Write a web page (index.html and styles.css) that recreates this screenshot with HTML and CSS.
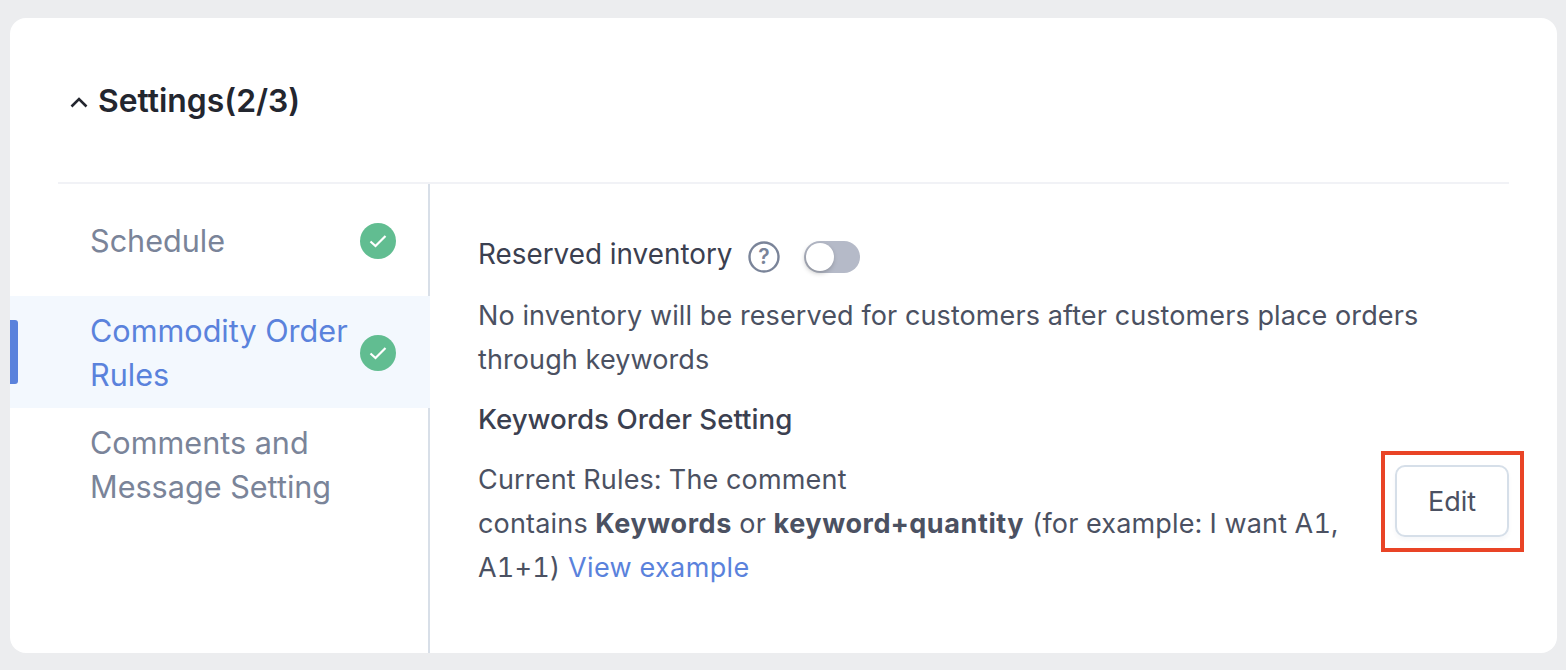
FILE: index.html
```html
<!DOCTYPE html>
<html lang="en">

<head>
    <meta charset="UTF-8">
    <title>Settings</title>
    <link rel="stylesheet" href="styles.css">
</head>

<body>
    <div class="card">
        <div class="card-header">
            <svg class="chevron" width="18" height="12" viewBox="0 0 18 12">
                <path d="M1.5 10.5 L9 3 L16.5 10.5" fill="none" stroke="#23262f" stroke-width="2.6" />
            </svg>
            <h2>Settings(2/3)</h2>
        </div>
        <div class="card-body">
            <div class="side-nav">
                <div class="nav-item">
                    <span class="nav-label">Schedule</span>
                    <svg class="check" width="36" height="36" viewBox="0 0 36 36">
                        <circle cx="18" cy="18" r="18" fill="#61bd91" />
                        <path d="M10.5 18.5 L15.5 23 L25.5 13" fill="none" stroke="#fff" stroke-width="2.2" />
                    </svg>
                </div>
                <div class="nav-item active">
                    <span class="nav-label">Commodity Order Rules</span>
                    <svg class="check" width="36" height="36" viewBox="0 0 36 36">
                        <circle cx="18" cy="18" r="18" fill="#61bd91" />
                        <path d="M10.5 18.5 L15.5 23 L25.5 13" fill="none" stroke="#fff" stroke-width="2.2" />
                    </svg>
                </div>
                <div class="nav-item">
                    <span class="nav-label">Comments and Message Setting</span>
                </div>
            </div>
            <div class="content">
                <div class="switch-row">
                    <span class="switch-label">Reserved inventory</span>
                    <svg class="help" width="32" height="32" viewBox="0 0 32 32">
                        <circle cx="16" cy="16" r="14.5" fill="none" stroke="#7a8499" stroke-width="2.4" />
                        <text x="16" y="23" text-anchor="middle" class="help-mark">?</text>
                    </svg>
                    <span class="switch"><span class="knob"></span></span>
                </div>
                <p class="desc">No inventory will be reserved for customers after customers place orders through keywords</p>
                <h3>Keywords Order Setting</h3>
                <div class="rule-row">
                    <p class="rule">Current Rules: The comment<br>contains <b>Keywords</b> or <b>keyword+quantity</b> (for example: I want A1, A1+1) <a href="#">View example</a></p>
                    <div class="edit-wrap">
                        <button class="edit-btn">Edit</button>
                    </div>
                </div>
            </div>
        </div>
    </div>
</body>

</html>
```

FILE: styles.css
```css
html, body {
    margin: 0;
    padding: 0;
}

body {
    width: 1566px;
    height: 670px;
    overflow: hidden;
    box-sizing: border-box;
    padding: 18px 9px 17px 10px;
    background: #ecedef;
    font-family: "Inter", "Liberation Sans", sans-serif;
    color: #4b5162;
}

.card {
    height: 635px;
    background: #fff;
    border-radius: 16px;
    display: flex;
    flex-direction: column;
}

.card-header {
    height: 166px;
    margin: 0 48px;
    border-bottom: 2px solid #f1f2f6;
    box-sizing: border-box;
    display: flex;
    align-items: flex-start;
    padding-top: 60px;
}

.chevron {
    margin: 18px 10px 0 12px;
}

h2 {
    margin: 0;
    font-size: 31.85px;
    line-height: 46px;
    font-weight: 600;
    color: #23262f;
}

.card-body {
    flex: 1;
    display: flex;
    min-height: 0;
}

.side-nav {
    width: 420px;
    flex-shrink: 0;
    box-sizing: border-box;
    border-right: 2px solid #d8dfe8;
    padding-top: 35px;
}

.nav-item {
    position: relative;
    display: flex;
    align-items: center;
    padding: 0 32px 0 80px;
    font-size: 30.6px;
    line-height: 44px;
    color: #7a8499;
    min-height: 44px;
}

.nav-item:first-child {
    margin-bottom: 33px;
}

.nav-item.active {
    padding-top: 13px;
    padding-bottom: 11px;
    margin-right: -2px;
    padding-right: 34px;
    background: #f3f8fe;
    color: #5a82dc;
    margin-bottom: 13px;
}

/* blue marker on the selected row */
.nav-item.active::before {
    content: "";
    position: absolute;
    left: 0;
    top: 24px;
    width: 8px;
    height: 64px;
    background: #5a82dc;
    border-radius: 0 3px 3px 0;
}

.nav-label {
    flex: 1;
}

.check {
    flex-shrink: 0;
}

.content {
    flex: 1;
    box-sizing: border-box;
    padding: 49px 48px 0 48px;
    font-size: 27px;
    line-height: 44px;
    letter-spacing: 0.1px;
}

.switch-row {
    display: flex;
    align-items: center;
    height: 44px;
}

.switch-label {
    padding-bottom: 2px;
    color: #3b4050;
    font-size: 27.85px;
    letter-spacing: 0;
}

.help {
    margin: 3px 0 0 16px;
}

.help-mark {
    font-size: 21px;
    font-weight: 600;
    fill: #7a8499;
}

.switch {
    position: relative;
    display: block;
    width: 56px;
    height: 32px;
    margin: 4px 0 0 24px;
    border-radius: 16px;
    background: #b5bac8;
}

.knob {
    position: absolute;
    left: 2px;
    top: 2px;
    width: 28px;
    height: 28px;
    border-radius: 50%;
    background: #fff;
    box-shadow: -1px 2px 5px rgba(0, 0, 0, 0.25);
}

.desc {
    margin: 17px 0 0 0;
}

h3 {
    margin: 15px 0 0 0;
    font-size: 27.7px;
    line-height: 44px;
    font-weight: 500;
    letter-spacing: 0;
    color: #3b4050;
}

.rule-row {
    display: flex;
    align-items: flex-start;
    margin-top: 17px;
}

.rule {
    flex: 1;
    margin: 0;
    padding-right: 44px;
    font-variant-numeric: tabular-nums;
    letter-spacing: 0.18px;
}

.rule b {
    font-weight: 700;
    letter-spacing: 0.6px;
}

.rule a {
    color: #5a82dc;
    text-decoration: none;
    letter-spacing: 0.35px;
}

.edit-wrap {
    flex-shrink: 0;
    position: relative;
}

.edit-btn {
    display: block;
    width: 114px;
    height: 72px;
    margin-top: 7px;
    box-sizing: border-box;
    border: 2px solid #d6dfe9;
    border-radius: 10px;
    background: #fff;
    box-shadow: 0 3px 4px rgba(30, 50, 90, 0.04);
    font-family: inherit;
    font-size: 27px;
    color: #4b5162;
}

/* red annotation frame drawn over the screenshot */
.edit-wrap::after {
    content: "";
    position: absolute;
    left: -14px;
    right: -15px;
    top: -7px;
    height: 93px;
    border: 4px solid #e94426;
    pointer-events: none;
}
```
